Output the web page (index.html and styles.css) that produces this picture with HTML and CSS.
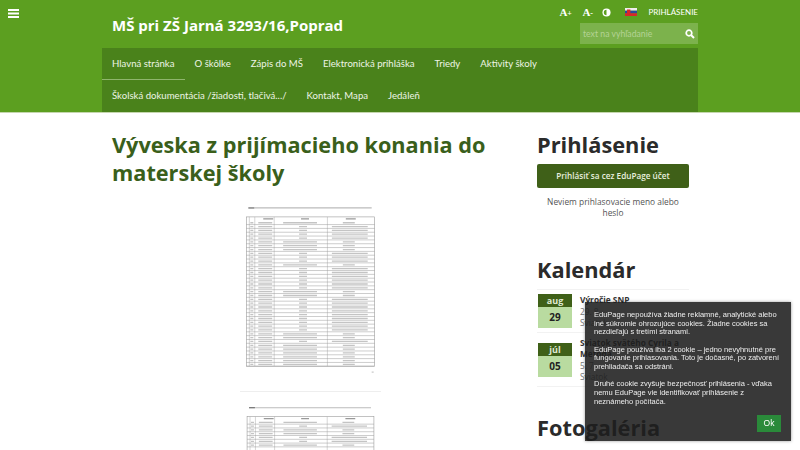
FILE: index.html
```html
<!DOCTYPE html>
<html lang="sk">
<head>
  <meta charset="UTF-8">
  <title>MŠ pri ZŠ Jarná 3293/16,Poprad</title>
  <link rel="stylesheet" href="styles.css">
</head>
<body>
<div class="page">

  <header class="header">
    <div class="header-left">
      <svg class="hamburger" width="11" height="9" viewBox="0 0 11 9"><path d="M0 0h11v2H0zM0 3.5h11v2H0zM0 7h11v2H0z" fill="#fff"/></svg>
    </div>
    <div class="header-center">
      <div class="header-top">
        <div class="site-title">MŠ pri ZŠ Jarná 3293/16,Poprad</div>
        <div class="tools">
          <div class="tools-row">
            <span class="tool-font">A<small>+</small></span>
            <span class="tool-font">A<small>-</small></span>
            <svg class="tool-contrast" width="9" height="9" viewBox="0 0 10 10"><circle cx="5" cy="5" r="4.5" fill="#fff"/><path d="M5 2a3 3 0 0 0 0 6z" fill="#5c9f20"/></svg>
            <svg class="tool-flag" width="12" height="8" viewBox="0 0 12 8"><path d="M0 0h12v2.7H0z" fill="#eee"/><path d="M0 2.7h12v2.6H0z" fill="#2a4a9a"/><path d="M0 5.3h12V8H0z" fill="#d8262c"/><path d="M2 1.5h3.4v3.2c0 1-1 1.6-1.7 1.9C3 6.300 2 5.700 2 4.700z" fill="#d8262c"/></svg>
            <span class="tool-login">PRIHLÁSENIE</span>
          </div>
          <div class="search">
            <span>text na vyhľadanie</span>
            <svg width="10" height="10" viewBox="0 0 10 10"><circle cx="4" cy="4" r="2.800" fill="none" stroke="#fff" stroke-width="1.700"/><path d="M6 6l3 3" stroke="#fff" stroke-width="2"/></svg>
          </div>
        </div>
      </div>
      <nav class="nav">
        <div class="nav-row">
          <a class="nav-item active">Hlavná stránka</a>
          <a class="nav-item">O škôlke</a>
          <a class="nav-item">Zápis do MŠ</a>
          <a class="nav-item">Elektronická prihláška</a>
          <a class="nav-item">Triedy</a>
          <a class="nav-item">Aktivity školy</a>
        </div>
        <div class="nav-row">
          <a class="nav-item">Školská dokumentácia /žiadosti, tlačivá.../</a>
          <a class="nav-item">Kontakt, Mapa</a>
          <a class="nav-item">Jedáleň</a>
        </div>
      </nav>
    </div>
  </header>

  <div class="content">
    <main class="main">
      <h1>Výveska z prijímacieho konania do materskej školy</h1>

      <svg class="doc" width="141" height="192" viewBox="0 0 141 192">
        <defs>
          <g id="rowA">
            <path d="M0 3.850H129" stroke="#999" stroke-width=".5"/>
            <path d="M4 2h3M12 2h14M53 2h8M86 2h36" stroke="#c4c4c4" stroke-width="1.300"/>
          </g>
          <g id="rowB">
            <path d="M0 3.850H129" stroke="#999" stroke-width=".5"/>
            <path d="M4 2h3M12 2h14M37 2h34M97 2h12" stroke="#c4c4c4" stroke-width="1.300"/>
          </g>
        </defs>
        <path d="M14 8h118" stroke="#bbb" stroke-width="1.200"/>
        <path d="M8 8h6" stroke="#666" stroke-width="1.200"/>
        <g transform="translate(6 17)">
          <rect width="129" height="150" fill="none" stroke="#999" stroke-width=".6"/>
          <path d="M17 2h10M55 2h8M100 2h10" stroke="#999" stroke-width="1.200"/>
          <path d="M3 0v150M8.500 0v150M28 0v150M81.500 0v150" stroke="#aaa" stroke-width=".5"/>
          <use href="#rowB" y="3.850"/><use href="#rowA" y="7.700"/><use href="#rowA" y="11.550"/>
          <use href="#rowA" y="15.400"/><use href="#rowA" y="19.250"/><use href="#rowB" y="23.100"/>
          <use href="#rowB" y="26.950"/><use href="#rowB" y="30.800"/><use href="#rowA" y="34.650"/>
          <use href="#rowA" y="38.500"/><use href="#rowA" y="42.350"/><use href="#rowB" y="46.200"/>
          <use href="#rowA" y="50.050"/><use href="#rowA" y="53.900"/><use href="#rowA" y="57.750"/>
          <use href="#rowA" y="61.600"/><use href="#rowA" y="65.450"/><use href="#rowA" y="69.300"/>
          <use href="#rowB" y="73.150"/><use href="#rowB" y="77"/><use href="#rowA" y="80.850"/>
          <use href="#rowA" y="84.700"/><use href="#rowA" y="88.550"/><use href="#rowA" y="92.400"/>
          <use href="#rowA" y="96.250"/><use href="#rowA" y="100.100"/><use href="#rowA" y="103.950"/>
          <use href="#rowA" y="107.800"/><use href="#rowA" y="111.650"/><use href="#rowB" y="115.500"/>
          <use href="#rowB" y="119.350"/><use href="#rowA" y="123.200"/><use href="#rowB" y="127.050"/>
          <use href="#rowB" y="130.900"/><use href="#rowB" y="134.750"/><use href="#rowB" y="138.600"/>
          <use href="#rowB" y="142.450"/><use href="#rowB" y="146.300"/>
        </g>
        <path d="M132 173h2" stroke="#bbb" stroke-width="1"/>
      </svg>

      <svg class="doc" width="141" height="60" viewBox="0 0 141 60">
        <path d="M14 16h118" stroke="#bbb" stroke-width="1.200"/>
        <path d="M8 16h6" stroke="#666" stroke-width="1.200"/>
        <g transform="translate(6 25)">
          <rect width="129" height="60" fill="none" stroke="#999" stroke-width=".6"/>
          <path d="M17 2h10M55 2h8M100 2h10" stroke="#999" stroke-width="1.200"/>
          <path d="M3 0v60M8.500 0v60M28 0v60M81.500 0v60" stroke="#aaa" stroke-width=".5"/>
          <use href="#rowB" y="3.850"/><use href="#rowA" y="7.700"/><use href="#rowB" y="11.550"/>
          <use href="#rowB" y="15.400"/><use href="#rowA" y="19.250"/><use href="#rowA" y="23.100"/>
          <use href="#rowB" y="26.950"/>
        </g>
      </svg>
    </main>

    <aside class="sidebar">
      <section class="login">
        <h2>Prihlásenie</h2>
        <a class="login-button">Prihlásiť sa cez EduPage účet</a>
        <p class="forgot">Neviem prihlasovacie meno alebo heslo</p>
      </section>

      <section class="calendar">
        <h2>Kalendár</h2>
        <div class="event">
          <div class="event-date">
            <div class="event-month">aug</div>
            <div class="event-day">29</div>
          </div>
          <div class="event-info">
            <div class="event-title">Výročie SNP</div>
            <div class="event-sub">29. 8.</div>
            <div class="event-sub">Sviatok</div>
          </div>
        </div>
        <div class="event">
          <div class="event-date">
            <div class="event-month">júl</div>
            <div class="event-day">05</div>
          </div>
          <div class="event-info">
            <div class="event-title">Sviatok svätého Cyrila a Metoda</div>
            <div class="event-sub">5. 7.</div>
            <div class="event-sub">Sviatok</div>
          </div>
        </div>
      </section>

      <section class="gallery">
        <h2>Fotogaléria</h2>
      </section>
    </aside>
  </div>

  <div class="cookie">
    <p>EduPage nepoužíva žiadne reklamné, analytické alebo iné súkromie ohrozujúce cookies. Žiadne cookies sa nezdieľajú s tretími stranami.</p>
    <p>EduPage používa iba 2 cookie – jedno nevyhnutné pre fungovanie prihlasovania. Toto je dočasné, po zatvorení prehliadača sa odstráni.</p>
    <p>Druhé cookie zvyšuje bezpečnosť prihlásenia - vďaka nemu EduPage vie identifikovať prihlásenie z neznámeho počítača.</p>
    <div class="cookie-actions"><a class="cookie-ok">Ok</a></div>
  </div>

</div>
</body>
</html>
```

FILE: styles.css
```css
* {
  margin: 0;
  padding: 0;
  box-sizing: border-box;
}

body {
  font-family: "Open Sans", "Liberation Sans", sans-serif;
  background-color: #fff;
}

.page {
  height: 450px;
  overflow: hidden;
}

.header {
  display: flex;
  height: 113px;
  background-color: #5c9f20;
  border-bottom: 1px solid #c5d6ae;
}

.header-left {
  width: 102px;
  padding: 9px 0 0 8px;
}

.hamburger {
  display: block;
}

.header-center {
  width: 596px;
}

.header-top {
  display: flex;
  justify-content: space-between;
  height: 48px;
}

.site-title {
  padding: 14px 0 0 10px;
  font-size: 15px;
  line-height: 22px;
  font-weight: 700;
  color: #fff;
}

.tools {
  display: flex;
  flex-direction: column;
  align-items: flex-end;
}

.tools-row {
  display: flex;
  align-items: center;
  height: 23px;
  padding-top: 1px;
  color: #fff;
}

.tool-font {
  width: 23px;
  font-family: "Liberation Serif", serif;
  font-size: 11px;
  font-weight: 700;
}

.tool-font small {
  font-size: 8px;
}

.tool-contrast {
  margin-left: -3px;
}

.tool-flag {
  margin-left: 14px;
}

.tool-login {
  margin-left: 11px;
  font-family: Lato, sans-serif;
  font-size: 8px;
}

.search {
  display: flex;
  align-items: center;
  justify-content: space-between;
  width: 118px;
  height: 21px;
  padding: 0 3px;
  background-color: rgba(255, 255, 255, .2);
  font-family: Lato, sans-serif;
  font-size: 8.7px;
  color: #b4d295;
}

.nav {
  height: 64px;
  background-color: #4a821b;
}

.nav-row {
  display: flex;
  height: 32px;
}

.nav-item {
  padding: 0 10px;
  font-family: Lato, sans-serif;
  font-size: 9.6px;
  line-height: 31px;
  color: #eef5e6;
}

.active {
  height: 32px;
  border-bottom: 1px solid #8fb56d;
}

.content {
  display: flex;
  padding-left: 112px;
}

.main {
  width: 425px;
  padding-top: 18px;
}

h1 {
  width: 390px;
  margin-bottom: 13px;
  font-size: 21.7px;
  line-height: 28px;
  font-weight: 700;
  color: #3a5f1b;
}

.doc {
  display: block;
  margin-left: 128px;
  border-bottom: 1px solid #eee;
  filter: blur(.35px);
}

.sidebar {
  width: 152px;
}

h2 {
  font-size: 21.8px;
  line-height: 32px;
  font-weight: 700;
  color: #2b2b2b;
}

.login {
  padding-top: 16px;
}

.login-button {
  display: block;
  height: 24px;
  margin-top: 3px;
  background-color: #3f6018;
  border-radius: 2px;
  font-size: 8.2px;
  font-weight: 600;
  line-height: 24px;
  text-align: center;
  color: #e8efdf;
}

.forgot {
  margin-top: 8px;
  font-size: 8.4px;
  line-height: 11px;
  text-align: center;
  color: #555;
}

.calendar {
  margin-top: 36px;
}

.calendar h2 {
  height: 36px;
  border-bottom: 1px solid #f2f2f2;
}

.event {
  display: flex;
  align-items: center;
  gap: 8px;
  padding: 4px 0 3px 1px;
  border-bottom: 1px solid #f2f2f2;
}

.event-date {
  flex-shrink: 0;
  width: 34px;
  text-align: center;
  font-weight: 700;
}

.event-month {
  height: 13px;
  background-color: #3f6018;
  font-size: 9px;
  line-height: 13px;
  color: #dfe9d2;
}

.event-day {
  height: 21px;
  background-color: #b9dba0;
  font-size: 10px;
  line-height: 21px;
  color: #222;
}

.event-title {
  font-size: 8.3px;
  font-weight: 700;
  line-height: 11.5px;
  color: #333;
}

.event-sub {
  font-size: 8.3px;
  line-height: 11.5px;
  color: #777;
}

.gallery {
  margin-top: 25px;
}

.cookie {
  position: fixed;
  left: 585px;
  top: 302px;
  display: flex;
  flex-direction: column;
  width: 206px;
  height: 139px;
  padding: 9px 10px 10px 9px;
  background-color: rgba(30, 30, 30, .88);
  box-shadow: 0 0 3px rgba(0, 0, 0, .4);
  font-family: "Liberation Sans", Arial, sans-serif;
  font-size: 7.5px;
  line-height: 8.7px;
  color: #eee;
}

.cookie p {
  margin-bottom: 8.5px;
}

.cookie-actions {
  display: flex;
  justify-content: flex-end;
  margin-top: auto;
}

.cookie-ok {
  width: 24px;
  height: 17px;
  background-color: #2a8a3a;
  font-size: 8.5px;
  line-height: 17px;
  text-align: center;
  color: #fff;
}
```
